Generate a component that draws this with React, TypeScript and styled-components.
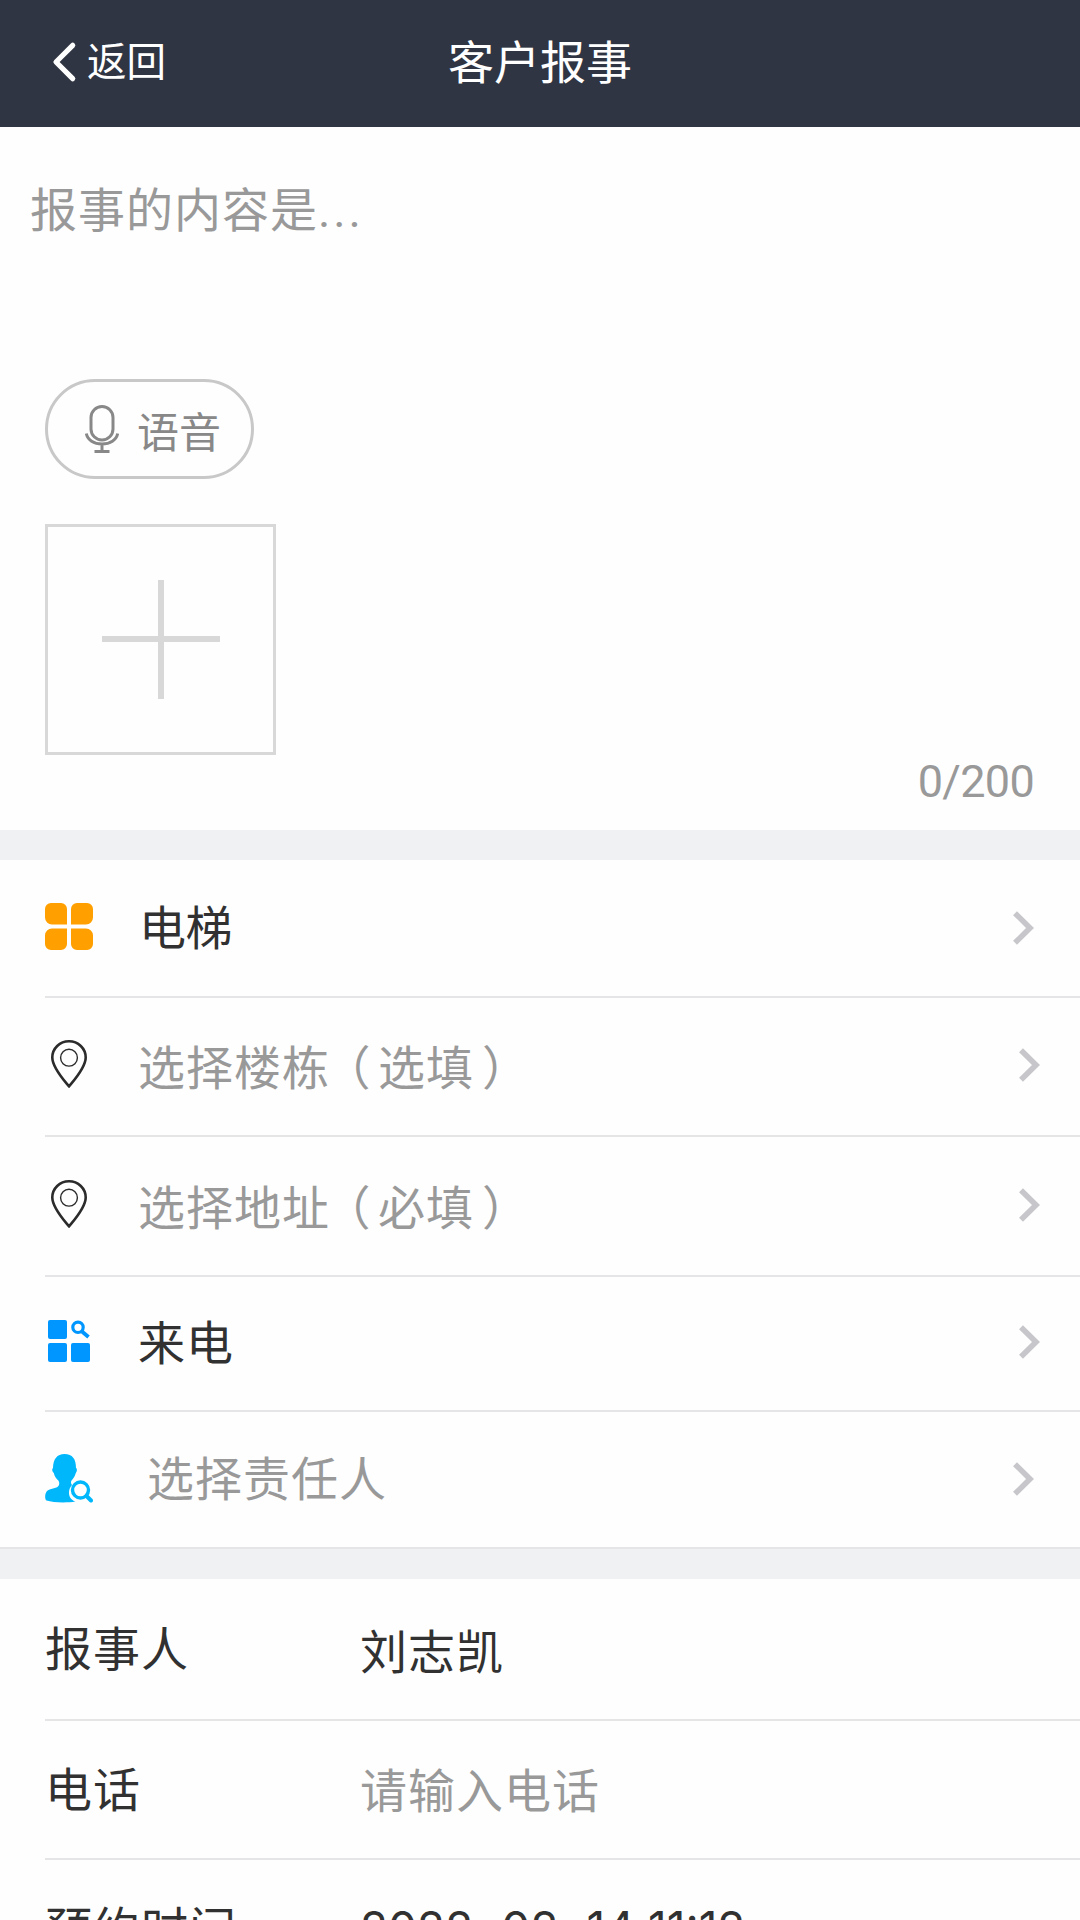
import React from 'react';
import styled, { createGlobalStyle } from 'styled-components';

const GlobalStyle = createGlobalStyle`
  * { box-sizing: border-box; }
  html, body { margin: 0; padding: 0; background: #fff; overflow: hidden; }
  body { font-family: Roboto, "Noto Sans CJK SC", sans-serif; }
  button, input, textarea { font: inherit; color: inherit; background: none; border: 0; padding: 0; margin: 0; }
  svg { display: block; flex: none; }
`;

const Page = styled.div`
  width: 1080px;
  height: 1920px;
  overflow: hidden;
  display: flex;
  flex-direction: column;
  background: #fefefe;
`;

const Header = styled.header`
  height: 127px;
  flex: none;
  display: grid;
  grid-template-columns: 1fr auto 1fr;
  align-items: center;
  background: #2f3542;
  color: #fff;
  padding: 0 50px 1px;
`;

const BackButton = styled.button`
  display: flex;
  align-items: center;
  gap: 10px;
  font-size: 39.5px;
  line-height: 60px;

  svg {
    margin: 0 0 2px -1px;
  }
`;

const Title = styled.h1`
  margin: 0;
  font-size: 46px;
  line-height: 60px;
  font-weight: 400;
`;

const Report = styled.section`
  height: 703px;
  flex: none;
  display: flex;
  flex-direction: column;
  align-items: flex-start;
  padding: 49px 45px 0;
`;

const Placeholder = styled.div`
  height: 203px;
  margin-left: -15px;
  font-size: 47px;
  line-height: 70px;
  letter-spacing: 1px;
  color: #999;
`;

const Dots = styled.span`
  letter-spacing: 2.8px;
`;

const VoiceButton = styled.button`
  width: 209px;
  height: 100px;
  flex: none;
  display: flex;
  align-items: center;
  gap: 18px;
  padding: 9px 0 0 37px;
  border: 3px solid #c8c8c8;
  border-radius: 50px;
  font-size: 42px;
  line-height: 50px;
  color: #888;

  svg {
    margin-bottom: 9px;
  }
`;

const AddPhoto = styled.button`
  width: 231px;
  height: 231px;
  flex: none;
  margin-top: 45px;
  display: flex;
  align-items: center;
  justify-content: center;
  border: 3px solid #d8d8d8;
`;

const Counter = styled.div`
  align-self: flex-end;
  padding-right: 1px;
  font-size: 45px;
  line-height: 54px;
  letter-spacing: -0.7px;
  color: #999;
`;

const Gap = styled.div`
  height: 30px;
  flex: none;
  background: #f0f1f3;
`;

const Row = styled.div<{ $height: number; $right?: number }>`
  height: ${p => p.$height}px;
  flex: none;
  margin-left: 45px;
  padding-right: ${p => p.$right ?? 0}px;
  display: flex;
  align-items: center;
  border-bottom: 2px solid #e5e5e7;
`;

const LastRow = styled(Row)`
  margin-left: 0;
  padding-left: 45px;
`;

const IconBox = styled.span<{ $lift?: number }>`
  width: 48px;
  flex: none;
  display: flex;
  justify-content: center;
  padding-bottom: ${p => p.$lift ?? 0}px;
`;

const RowText = styled.span<{ $muted?: boolean; $indent: number; $drop?: number; $tight?: boolean }>`
  flex: 1;
  padding-left: ${p => p.$indent}px;
  padding-top: ${p => p.$drop ?? 0}px;
  font-size: 47px;
  line-height: 60px;
  letter-spacing: ${p => (p.$tight ? -0.5 : 1)}px;
  color: ${p => (p.$muted ? '#999' : '#313131')};
`;

const OpenParen = styled.span`
  font-feature-settings: 'halt';
  margin: 0 6.5px 0 17px;
`;

const CloseParen = styled.span`
  font-feature-settings: 'halt';
  margin-left: 8px;
`;

const Label = styled.span<{ $drop?: number }>`
  width: 315px;
  flex: none;
  padding-top: ${p => p.$drop ?? 0}px;
  font-size: 47px;
  line-height: 60px;
  letter-spacing: 1px;
  color: #313131;
`;

const DateText = styled.span`
  padding-bottom: 2px;
  font-family: Inter, Roboto, sans-serif;
  font-size: 46px;
  line-height: 60px;
  color: #313131;
`;

const Hyphen = styled.span`
  margin: 0 3.5px;
`;

const ChevronBox = styled.span<{ $lift?: number }>`
  flex: none;
  padding-bottom: ${p => p.$lift ?? 0}px;
`;

const Chevron = ({ lift = 0 }: { lift?: number }) => (
  <ChevronBox $lift={lift}>
    <svg width="22" height="34" viewBox="0 0 22 34" fill="none" stroke="#c7c7cb" strokeWidth="5.6">
      <path d="M2 2.2 17 17 2 31.8" />
    </svg>
  </ChevronBox>
);

const BackIcon = () => (
  <svg width="28" height="44" viewBox="0 0 28 44" fill="none" stroke="#fff" strokeWidth="5.2" strokeLinecap="round" strokeLinejoin="round">
    <path d="M23.7 5.3 7 22 23.7 38.7" />
  </svg>
);

const MicIcon = () => (
  <svg width="34" height="49" viewBox="0 0 34 49" fill="none" stroke="#888" strokeWidth="3">
    <rect x="6" y="1.5" width="22" height="33.5" rx="11" />
    <path d="M1.3 28.5C2.5 35 9 39 17 39s14.500-4 15.700-10.500M17 39v7M9.500 46.500h15" />
  </svg>
);

const PlusIcon = () => (
  <svg width="118" height="119" viewBox="0 0 118 119" fill="#d8d8d8">
    <path d="M56 0h6v119h-6zM0 56h118v6H0z" />
  </svg>
);

const TilesIcon = () => (
  <svg width="48" height="47" viewBox="0 0 48 47" fill="#ff9f00">
    <path d="M6 0h10a6 6 0 0 1 6 6v15.500H7a7 7 0 0 1-7-7V6a6 6 0 0 1 6-6z" />
    <path d="M32 0h10a6 6 0 0 1 6 6v8.500a7 7 0 0 1-7 7H26V6a6 6 0 0 1 6-6z" />
    <path d="M7 25.500h15V41a6 6 0 0 1-6 6H6a6 6 0 0 1-6-6v-8.500a7 7 0 0 1 7-7z" />
    <path d="M26 25.500h15a7 7 0 0 1 7 7V41a6 6 0 0 1-6 6H32a6 6 0 0 1-6-6z" />
  </svg>
);

const PinIcon = () => (
  <svg width="36" height="48" viewBox="0 0 36 48" fill="none" stroke="#2b2b2b">
    <path strokeWidth="2.600" strokeLinejoin="round" d="M18 46.500C14.500 42 1.300 28 1.300 17.500a16.700 16.200 0 0 1 33.400 0C34.700 28 21.500 42 18 46.500z" />
    <circle cx="18" cy="17.700" r="8.400" strokeWidth="1.400" />
  </svg>
);

const TilesSearchIcon = () => (
  <svg width="42" height="42" viewBox="0 0 42 42" fill="#0096ff">
    <rect width="19" height="19" rx="2" />
    <rect y="23" width="19" height="19" rx="2" />
    <rect x="23" y="23" width="19" height="19" rx="2" />
    <circle cx="30" cy="7.300" r="5.200" fill="none" stroke="#0096ff" strokeWidth="3.200" />
    <path d="M34 11.500 40.500 17" stroke="#0096ff" strokeWidth="3.800" />
  </svg>
);

const PersonSearchIcon = () => (
  <svg width="48" height="49" viewBox="0 0 48 49" fill="#00b7fc">
    <path d="M19.500 0C27.500 0 31 5 31 14c1.300.6 1.200 3.500-.2 5-1 3.500-2.600 5.700-4.600 8-.4 1.600-.2 2.800.8 4C22.500 36 22.500 44.500 30.500 47.500 22 49 8 48.700 1.500 46.500-.5 45-.2 39.500 2 37c4-3.300 10.500-2 12-6 .5-2 .2-3-.5-4.200-2.500-2.300-4-4.300-4.700-7.800C7 17.500 6.700 14.600 8 14 8.200 5 12 0 19.500 0z" />
    <circle cx="35.500" cy="36" r="8" fill="none" stroke="#00b7fc" strokeWidth="3.400" />
    <path d="M41.500 42 46 46.500" stroke="#00b7fc" strokeWidth="4" strokeLinecap="round" />
  </svg>
);

export default function App() {
  return (
    <Page>
      <GlobalStyle />
      <Header>
        <BackButton><BackIcon />返回</BackButton>
        <Title>客户报事</Title>
      </Header>

      <Report>
        <Placeholder>报事的内容是<Dots>...</Dots></Placeholder>
        <VoiceButton><MicIcon />语音</VoiceButton>
        <AddPhoto aria-label="add"><PlusIcon /></AddPhoto>
        <Counter>0/200</Counter>
      </Report>

      <Gap />
      <Row $height={138} $right={45}>
        <IconBox $lift={3}><TilesIcon /></IconBox>
        <RowText $tight $indent={46} $drop={2}>电梯</RowText>
        <Chevron />
      </Row>
      <Row $height={139} $right={39}>
        <IconBox $lift={5}><PinIcon /></IconBox>
        <RowText $muted $indent={45} $drop={5}>选择楼栋<OpenParen>（</OpenParen>选填<CloseParen>）</CloseParen></RowText>
        <Chevron lift={3} />
      </Row>
      <Row $height={140} $right={39}>
        <IconBox $lift={4}><PinIcon /></IconBox>
        <RowText $muted $indent={45} $drop={5}>选择地址<OpenParen>（</OpenParen>必填<CloseParen>）</CloseParen></RowText>
        <Chevron lift={2} />
      </Row>
      <Row $height={135} $right={39}>
        <IconBox $lift={5}><TilesSearchIcon /></IconBox>
        <RowText $indent={45}>来电</RowText>
        <Chevron lift={4} />
      </Row>
      <LastRow $height={137} $right={45}>
        <IconBox $lift={3}><PersonSearchIcon /></IconBox>
        <RowText $muted $indent={54}>选择责任人</RowText>
        <Chevron lift={2} />
      </LastRow>
      <Gap />

      <Row $height={142}>
        <Label $drop={1}>报事人</Label>
        <RowText $indent={0} $drop={7}>刘志凯</RowText>
      </Row>
      <Row $height={139}>
        <Label $drop={2}>电话</Label>
        <RowText $muted $indent={0} $drop={5}>请输入电话</RowText>
      </Row>
      <Row $height={139}>
        <Label $drop={3}>预约时间</Label>
        <DateText>2022<Hyphen>-</Hyphen>02<Hyphen>-</Hyphen>14 11:12</DateText>
      </Row>
    </Page>
  );
}
